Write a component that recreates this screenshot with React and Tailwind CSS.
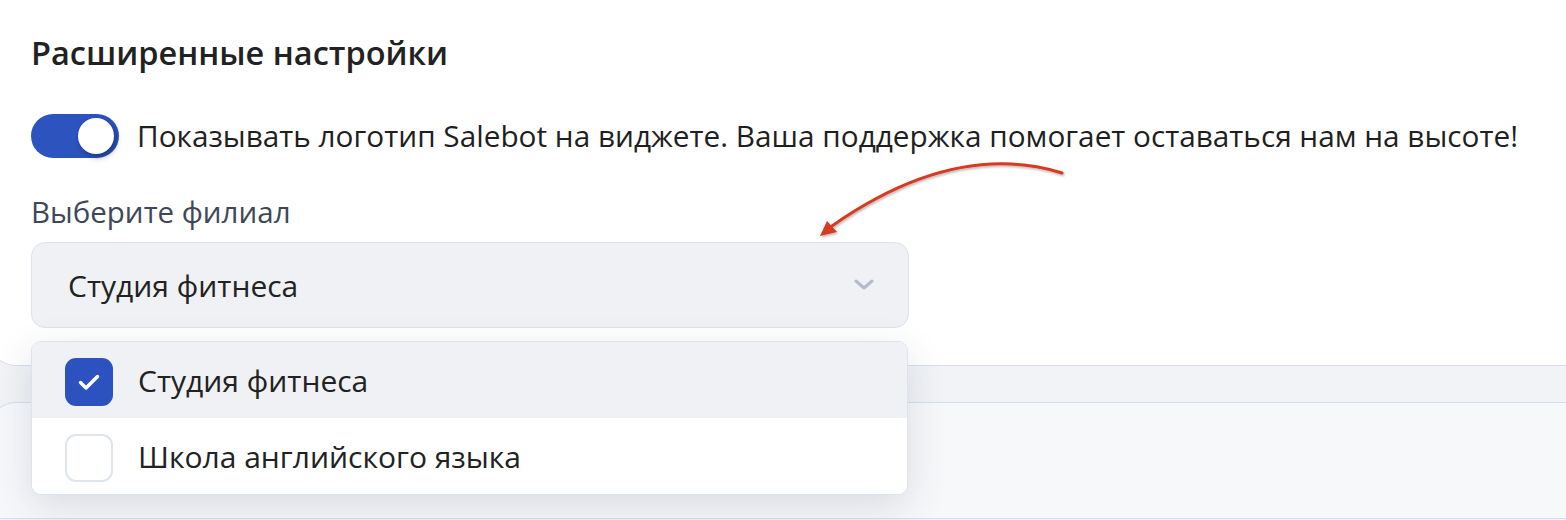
import { useState } from "react";

const OPTIONS = ["Студия фитнеса", "Школа английского языка"];

export default function App() {
  const [enabled, setEnabled] = useState(true);
  const [selected, setSelected] = useState([0]);

  const toggleOption = (i) =>
    setSelected((s) => (s.includes(i) ? s.filter((x) => x !== i) : [...s, i]));

  return (
    <div className="relative min-h-[520px] overflow-hidden bg-[#f1f3f6] font-['Open_Sans',sans-serif] text-[#222]">
      {/* Верхняя карточка */}
      <div className="-ml-3 rounded-bl-[28px] border-b border-l border-[#d6deef] bg-white pb-[37px] pl-[42px] pr-6 pt-[34px]">
        <h2 className="text-[32.5px] font-semibold leading-[38px] text-[#222]">
          Расширенные настройки
        </h2>

        <div className="mt-[42px] flex items-center gap-[18px]">
          <button
            onClick={() => setEnabled(!enabled)}
            className={`flex h-[44px] w-[88px] shrink-0 items-center rounded-full px-[5px] ${
              enabled ? "justify-end bg-[#2d53bf]" : "justify-start bg-[#cfd6e4]"
            }`}
          >
            <span className="h-[36px] w-[36px] rounded-full bg-white shadow-[2px_3px_6px_rgba(0,0,0,0.35)]" />
          </button>
          <span className="whitespace-nowrap text-[29.75px] leading-[36px] text-[#1f1f1f]">
            Показывать логотип Salebot на виджете. Ваша поддержка помогает оставаться нам на высоте!
          </span>
        </div>

        <div className="mt-[36px] text-[29.5px] leading-[36px] text-[#3f4858]">Выберите филиал</div>

        <div className="relative mt-[12px] w-[878px]">
          <div className="flex h-[86px] items-center justify-between rounded-[14px] border border-[#dde2ec] bg-[#eff1f5] pl-[36px] pr-[34px]">
            <span className="text-[30px]">{OPTIONS[selected[0] ?? 0]}</span>
            <svg width="20" height="12" viewBox="0 0 20 12" fill="none">
              <path d="M2 2l8 7 8-7" stroke="#b3bccc" strokeWidth="3" strokeLinecap="round" strokeLinejoin="round" />
            </svg>
          </div>

          {/* Выпадающий список */}
          <div className="absolute left-0 top-[99px] z-10 w-[877px] overflow-hidden rounded-[10px] border border-[#dde2ec] bg-white shadow-[0_12px_40px_rgba(40,50,80,0.14)]">
            {OPTIONS.map((o, i) => {
              const on = selected.includes(i);
              return (
                <div
                  key={o}
                  onClick={() => toggleOption(i)}
                  className={`flex h-[76px] items-center gap-[25px] pl-[33px] ${i === 0 ? "bg-[#eff1f5]" : "bg-white"}`}
                >
                  <span
                    className={`mt-[3px] flex h-[48px] w-[48px] items-center justify-center rounded-[11px] ${
                      on ? "bg-[#2c52c0]" : "border-2 border-[#dfe4ee] bg-white"
                    }`}
                  >
                    {on && (
                      <svg width="24" height="18" viewBox="0 0 24 18" fill="none">
                        <path d="M3.5 9.5l5.5 5.5L20.5 3.5" stroke="white" strokeWidth="3.5" strokeLinecap="round" strokeLinejoin="round" />
                      </svg>
                    )}
                  </span>
                  <span className="text-[30px]">{o}</span>
                </div>
              );
            })}
          </div>
        </div>
      </div>

      {/* Нижняя карточка */}
      <div className="-ml-3 mt-[36px] h-[117px] rounded-tl-[28px] border-y border-l border-[#d6deef] bg-[#f7f8fa]" />

      {/* Стрелка-указатель */}
      <svg className="pointer-events-none absolute left-0 top-0 z-20" width="1566" height="520">
        <defs>
          <filter id="sh" x="-10%" y="-10%" width="120%" height="120%">
            <feDropShadow dx="1" dy="1.5" stdDeviation="1" floodColor="#000" floodOpacity="0.3" />
          </filter>
        </defs>
        <g filter="url(#sh)">
          <path d="M1062 173 Q 955 140 832 226" stroke="#d63b24" strokeWidth="3" fill="none" strokeLinecap="round" />
          <path d="M820 236 L827 221 L837 232 Z" fill="#d63b24" />
        </g>
      </svg>
    </div>
  );
}
